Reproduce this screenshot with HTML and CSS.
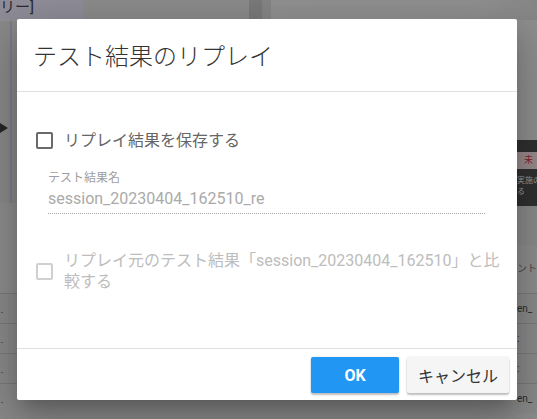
FILE: index.html
```html
<!DOCTYPE html>
<html lang="ja">
<head>
<meta charset="utf-8">
<link rel="stylesheet" href="styles.css">
</head>
<body>
<div class="app">
  <div class="top">
    <div class="t1">リー]</div>
    <div class="t2"></div>
    <div class="t3"></div>
    <div class="t4"></div>
    <div class="t5"></div>
  </div>
  <div class="main">
    <div class="lcol">
      <div class="ldiag"><span class="arrow"></span></div>
      <div class="lgap"></div>
      <div class="lrow"><span class="dot"></span></div>
      <div class="lrow"><span class="dot"></span></div>
      <div class="lrow"><span class="dot"></span></div>
      <div class="lrow"><span class="dot"></span></div>
    </div>
    <div class="mid"></div>
    <div class="rcol">
      <div class="rg1"></div>
      <div class="rdark">
        <div class="rpink">未</div>
        <div class="rtxt">実施の<br>る</div>
      </div>
      <div class="rg2"></div>
      <div class="rhead">ント</div>
      <div class="rrow">en_</div>
      <div class="rrow">:</div>
      <div class="rrow">:</div>
      <div class="rrow">en_</div>
    </div>
  </div>
</div>

<div class="dialog">
  <div class="dlg-head">
    <h1 class="dlg-title">テスト結果のリプレイ</h1>
  </div>
  <div class="dlg-body">
    <label class="check-row">
      <span class="box"></span>
      <span class="check-label">リプレイ結果を保存する</span>
    </label>
    <div class="field">
      <div class="field-label">テスト結果名</div>
      <div class="field-value">session_20230404_162510_re</div>
    </div>
    <label class="check-row disabled">
      <span class="box"></span>
      <span class="check-label">リプレイ元のテスト結果「session_20230404_162510」と比較する</span>
    </label>
  </div>
  <div class="dlg-foot">
    <button class="btn btn-ok">OK</button>
    <button class="btn btn-cancel">キャンセル</button>
  </div>
</div>
</body>
</html>
```

FILE: styles.css
```css
* { box-sizing: border-box; }
html, body {
  margin: 0;
  padding: 0;
  width: 537px;
  height: 419px;
  overflow: hidden;
  font-family: Roboto, "Noto Sans CJK JP", sans-serif;
}
body { position: relative; background: #8b8b8b; }

.app {
  display: flex;
  flex-direction: column;
  height: 419px;
}
.top {
  display: flex;
  height: 20px;
  flex: none;
}
.t1 {
  width: 83px;
  background: #8e8d98;
  color: #2a2a30;
  font-size: 15px;
  line-height: 14px;
  overflow: hidden;
  white-space: nowrap;
}
.t2 { width: 166px; background: #8b8b8b; }
.t3 { width: 13px; background: #7a7a7a; }
.t4 { width: 9px; background: #858585; }
.t5 { flex: 1; background: linear-gradient(to right, #909090, #8f8f8f 80%, #868686); }

.main { flex: 1; display: flex; }
.lcol { width: 17px; display: flex; flex-direction: column; background: #8a8a8a; }
.ldiag {
  height: 183px;
  position: relative;
  background: linear-gradient(to right, #8a8a8a 10px, #7e7b8e 10px, #7e7b8e 12px, #8a8a8a 12px);
  border-top: 1px dotted #9a9a9a;
}
.arrow {
  position: absolute;
  left: 0;
  top: 102px;
  width: 0; height: 0;
  border-top: 5px solid transparent;
  border-bottom: 5px solid transparent;
  border-left: 8px solid #262626;
}
.lgap { height: 90px; background: #8d8d8d; }
.lrow {
  height: 30px;
  border-top: 1px solid #7a7a7a;
  background: #8a8a8a;
  position: relative;
}
.dot {
  position: absolute;
  left: 1px;
  top: 18px;
  width: 2px; height: 1px;
  background: #3d5f80;
}
.mid { flex: 1; background: #8b8b8b; }
.rcol { width: 20px; display: flex; flex-direction: column; background: #8d8d8d; overflow: hidden; }
.rg1 { height: 120px; background: #8f8f8f; }
.rdark { height: 66px; background: #303030; padding-top: 12px; }
.rpink {
  height: 17px;
  background: #998a8c;
  color: #8a1d1d;
  font-size: 9px;
  line-height: 17px;
  white-space: nowrap;
  padding-left: 7px;
}
.rtxt {
  color: #9a9a9a;
  font-size: 8px;
  line-height: 11px;
  white-space: nowrap;
  padding-top: 6px;
}
.rg2 { height: 39px; background: #8a8a8a; }
.rhead {
  height: 48px;
  background: #8d8d8d;
  color: #4a4a4a;
  font-size: 10px;
  line-height: 48px;
  white-space: nowrap;
}
.rrow {
  height: 30px;
  border-top: 1px solid #7a7a7a;
  color: #2a2a2a;
  font-size: 10px;
  line-height: 30px;
  white-space: nowrap;
  background: #8a8a8a;
}

.dialog {
  position: absolute;
  left: 17px;
  top: 19px;
  width: 500px;
  height: 381px;
  background: #fff;
  border-radius: 2px;
  box-shadow: 0 11px 15px -7px rgba(0,0,0,.2), 0 24px 38px 3px rgba(0,0,0,.14), 0 9px 46px 8px rgba(0,0,0,.12);
  display: flex;
  flex-direction: column;
}
.dlg-head {
  height: 73px;
  border-bottom: 1px solid #e0e0e0;
  padding: 4px 16px 0;
  display: flex;
  align-items: center;
  flex: none;
}
.dlg-title {
  margin: 0;
  font-size: 24px;
  font-weight: 300;
  color: #333;
  line-height: 32px;
}
.dlg-body {
  flex: 1;
  padding: 36px 16px 0 19px;
}
.check-row {
  display: flex;
  align-items: center;
  gap: 11px;
  min-height: 24px;
}
.box {
  width: 17px;
  height: 17px;
  border: 2px solid #6a6a6a;
  border-radius: 2px;
  flex: none;
}
.check-label {
  font-size: 16px;
  color: #666;
  line-height: 21px;
}
.field {
  margin: 18px 0 0 12px;
  width: 437px;
  border-bottom: 1px dotted #a8a8a8;
  padding-bottom: 3px;
}
.field-label {
  font-size: 12px;
  line-height: 16px;
  color: #9e9e9e;
}
.field-value {
  margin-top: 2px;
  font-size: 16px;
  line-height: 22px;
  color: #aaa;
}
.check-row.disabled { margin-top: 36px; }
.check-row.disabled .box { border-color: #d0d0d0; }
.check-row.disabled .check-label { color: #bdbdbd; }

.dlg-foot {
  height: 52px;
  border-top: 1px solid #e0e0e0;
  display: flex;
  justify-content: flex-end;
  align-items: flex-start;
  gap: 8px;
  padding: 8px 8px 0;
  flex: none;
}
.btn {
  height: 36px;
  border: none;
  border-radius: 2px;
  font-family: Roboto, "Noto Sans CJK JP", sans-serif;
  font-size: 16px;
  box-shadow: 0 2px 2px rgba(0,0,0,.24), 0 0 2px rgba(0,0,0,.12);
  padding: 0;
}
.btn-ok {
  width: 88px;
  background: #2196f3;
  color: #fff;
  font-weight: 700;
}
.btn-cancel {
  width: 102px;
  background: #f5f5f5;
  color: #333;
}
```
